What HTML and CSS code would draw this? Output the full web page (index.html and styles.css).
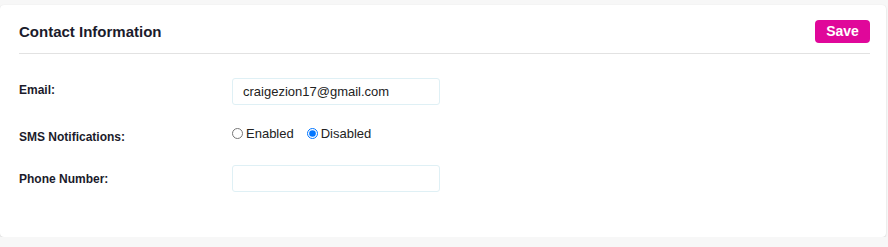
FILE: index.html
```html
<!DOCTYPE html>
<html>
<head>
<meta charset="utf-8">
<link rel="stylesheet" href="styles.css">
</head>
<body>
<div class="card">
  <div class="card-header">
    <h2 class="title">Contact Information</h2>
    <button class="save">Save</button>
  </div>
  <div class="form">
    <div class="row row-email">
      <label class="label">Email:</label>
      <input class="field" type="text" value="craigezion17@gmail.com">
    </div>
    <div class="row row-radio">
      <label class="label">SMS Notifications:</label>
      <div class="radios">
        <label class="opt"><input type="radio" name="sms"> Enabled</label>
        <label class="opt"><input type="radio" name="sms" checked> Disabled</label>
      </div>
    </div>
    <div class="row">
      <label class="label">Phone Number:</label>
      <input class="field" type="text" value="">
    </div>
  </div>
</div>
</body>
</html>
```
FILE: styles.css
```css
html, body {
  margin: 0;
  padding: 0;
  background: #f7f7f7;
  font-family: "Liberation Sans", Arial, sans-serif;
  color: #1a1a2e;
}
body {
  padding-top: 5px;
  padding-right: 2px;
}
.card {
  background: #fff;
  border-radius: 4px;
  box-shadow: 0 1px 2px rgba(0,0,0,0.12), 0 0 1px rgba(0,0,0,0.08);
  padding: 0 16px 0 19px;
  height: 232px;
  box-sizing: border-box;
}
.card-header {
  display: flex;
  justify-content: space-between;
  align-items: center;
  height: 48px;
  border-bottom: 1px solid #e2e2e2;
}
.title {
  margin: 0;
  font-size: 15px;
  font-weight: bold;
  color: #1b1b2b;
  padding-top: 5px;
}
.save {
  background: #e0079a;
  color: #fff;
  border: none;
  border-radius: 4px;
  font-family: "Liberation Sans", Arial, sans-serif;
  font-weight: bold;
  font-size: 14px;
  width: 55px;
  height: 23px;
  padding: 0;
  margin-top: 4px;
}
.form {
  padding-top: 24px;
  display: flex;
  flex-direction: column;
  gap: 18px;
}
.row {
  display: flex;
  align-items: center;
  height: 27px;
}
.row-email .label {
  padding-bottom: 4px;
}
.row-radio {
  height: 16px;
  margin: 2px 0 6px;
}
.label {
  width: 213px;
  font-size: 12px;
  font-weight: bold;
  color: #1b1b2b;
  flex-shrink: 0;
}
.row-radio .label {
  padding-top: 7px;
}
.field {
  width: 208px;
  height: 27px;
  box-sizing: border-box;
  border: 1px solid #dff0f5;
  border-radius: 3px;
  padding: 0 10px;
  font-family: "Liberation Sans", Arial, sans-serif;
  font-size: 13px;
  color: #222;
  outline: none;
}
.radios {
  display: flex;
  gap: 13px;
  font-size: 13px;
  color: #222;
}
.opt {
  display: flex;
  align-items: center;
  gap: 3px;
}
.opt input {
  margin: 0;
  width: 11px;
  height: 11px;
}
```
